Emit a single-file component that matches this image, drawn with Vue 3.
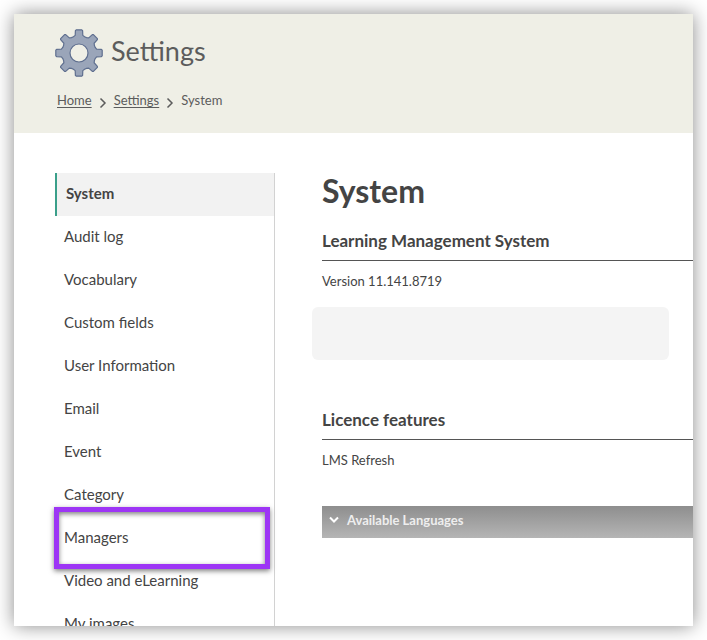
<script setup>
const items = [
  'System',
  'Audit log',
  'Vocabulary',
  'Custom fields',
  'User Information',
  'Email',
  'Event',
  'Category',
  'Managers',
  'Video and eLearning',
  'My images',
]
const current = 'System'
const highlighted = 'Managers'

// Outline of an eight-toothed gear centred on the origin.
function gearPath() {
  const tooth = [
    [-5.6, -16.2],
    [-3.8, -17.6],
    [-3.6, -22.4],
    [-2.8, -23.2],
    [2.8, -23.2],
    [3.6, -22.4],
    [3.8, -17.6],
    [5.6, -16.2],
  ]
  const points = []
  for (let i = 0; i < 8; i++) {
    const a = (i * Math.PI) / 4
    for (const [x, y] of tooth) {
      const px = x * Math.cos(a) - y * Math.sin(a)
      const py = x * Math.sin(a) + y * Math.cos(a)
      points.push(`${px.toFixed(2)} ${py.toFixed(2)}`)
    }
  }
  return `M${points.join('L')}Z M9 0A9 9 0 1 0 -9 0A9 9 0 1 0 9 0Z`
}
const gear = gearPath()
</script>

<template>
  <div class="page">
    <div class="card">
      <header class="banner">
        <div class="title">
          <svg class="gear" viewBox="-24 -24 48 48" aria-hidden="true">
            <path :d="gear" fill-rule="evenodd" />
          </svg>
          <span class="title-text">Settings</span>
        </div>
        <nav class="crumbs" aria-label="Breadcrumb">
          <a href="#home">Home</a>
          <svg class="chevron" viewBox="0 0 8 12" aria-hidden="true"><path d="M1.5 1.5L6 6L1.5 10.5" /></svg>
          <a href="#settings">Settings</a>
          <svg class="chevron" viewBox="0 0 8 12" aria-hidden="true"><path d="M1.5 1.5L6 6L1.5 10.5" /></svg>
          <span>System</span>
        </nav>
      </header>

      <div class="body">
        <nav class="sidebar" aria-label="Settings sections">
          <a
            v-for="item in items"
            :key="item"
            href="#"
            class="item"
            :class="{ active: item === current, marked: item === highlighted }"
          >{{ item }}</a>
        </nav>

        <main class="content">
          <h1>System</h1>
          <section>
            <h2>Learning Management System</h2>
            <p>Version 11.141.8719</p>
            <div class="panel"></div>
          </section>
          <section>
            <h2>Licence features</h2>
            <p>LMS Refresh</p>
          </section>
          <button type="button" class="accordion">
            <svg viewBox="0 0 10 8" aria-hidden="true"><path d="M1 1.5L5 5.5L9 1.5" /></svg>
            <span>Available Languages</span>
          </button>
        </main>
      </div>
    </div>
  </div>
</template>

<style>
body {
  margin: 0;
  background: #fff;
}
</style>

<style scoped>
.page {
  box-sizing: border-box;
  height: 100vh;
  padding: 14px;
  overflow: hidden;
  font-family: Lato, "Liberation Sans", sans-serif;
  color: #444;
}
.card {
  display: flex;
  flex-direction: column;
  height: 100%;
  overflow: hidden;
  background: #fff;
  box-shadow: 0 0 18px rgba(0, 0, 0, 0.46);
}
.banner {
  flex: none;
  padding: 15px 41px 24px;
  background: #efefe6;
  color: #5c5c5c;
}
.title {
  display: flex;
  align-items: center;
  gap: 8px;
}
.gear {
  width: 48px;
  height: 48px;
}
.gear path {
  fill: #9aa5b9;
  stroke: #5f6f8f;
  stroke-width: 1.2;
  stroke-linejoin: round;
}
.title-text {
  font-size: 27px;
  line-height: 44px;
  padding-bottom: 4px;
}
.crumbs {
  display: flex;
  align-items: center;
  gap: 7px;
  padding: 14px 2px 0;
  font-size: 13px;
  line-height: 18px;
}
.crumbs a {
  color: inherit;
  text-underline-offset: 2px;
}
.chevron {
  width: 8px;
  height: 12px;
  padding-top: 5px;
}
.chevron path {
  fill: none;
  stroke: #5c5c5c;
  stroke-width: 1.5;
}
.body {
  display: flex;
  flex: 1;
  min-height: 0;
  padding: 40px 0 0 41px;
}
.sidebar {
  flex: none;
  align-self: flex-start;
  width: 219px;
  border-right: 1px solid #d2d2d2;
}
.item {
  display: block;
  position: relative;
  padding: 0 9px 2px;
  font-size: 15px;
  line-height: 41px;
  color: #444;
  text-decoration: none;
}
.item.active {
  border-left: 2px solid #3a9f8a;
  background: #f2f2f2;
  font-weight: 700;
}
.item.marked::after {
  content: "";
  position: absolute;
  inset: -10px 4px -9px -1px;
  z-index: 1;
  border: 5px solid #9d35f5;
  box-shadow:
    0 2px 5px rgba(0, 0, 0, 0.5),
    inset 0 2px 5px rgba(0, 0, 0, 0.5);
}
.content {
  flex: 1;
  min-width: 0;
  padding-left: 47px;
}
h1 {
  margin: 0 0 20px;
  font-size: 32px;
  font-weight: 700;
  line-height: 36px;
}
h2 {
  margin: 0 0 10px;
  padding-bottom: 7px;
  border-bottom: 1px solid #555;
  font-size: 17px;
  font-weight: 700;
  line-height: 24px;
}
p {
  margin: 0;
  font-size: 13px;
  line-height: 20px;
}
.panel {
  height: 53px;
  margin: 16px 24px 48px -10px;
  border-radius: 6px;
  background: #f4f4f4;
}
.accordion {
  display: flex;
  align-items: center;
  gap: 8px;
  width: 100%;
  height: 32px;
  margin-top: 36px;
  padding: 0 7px 4px;
  border: 0;
  background: linear-gradient(#8e8e8e, #b5b5b5);
  color: #eee;
  font-family: inherit;
  font-size: 13px;
  font-weight: 700;
}
.accordion svg {
  width: 10px;
  height: 8px;
}
.accordion path {
  fill: none;
  stroke: #fff;
  stroke-width: 2;
}
</style>
